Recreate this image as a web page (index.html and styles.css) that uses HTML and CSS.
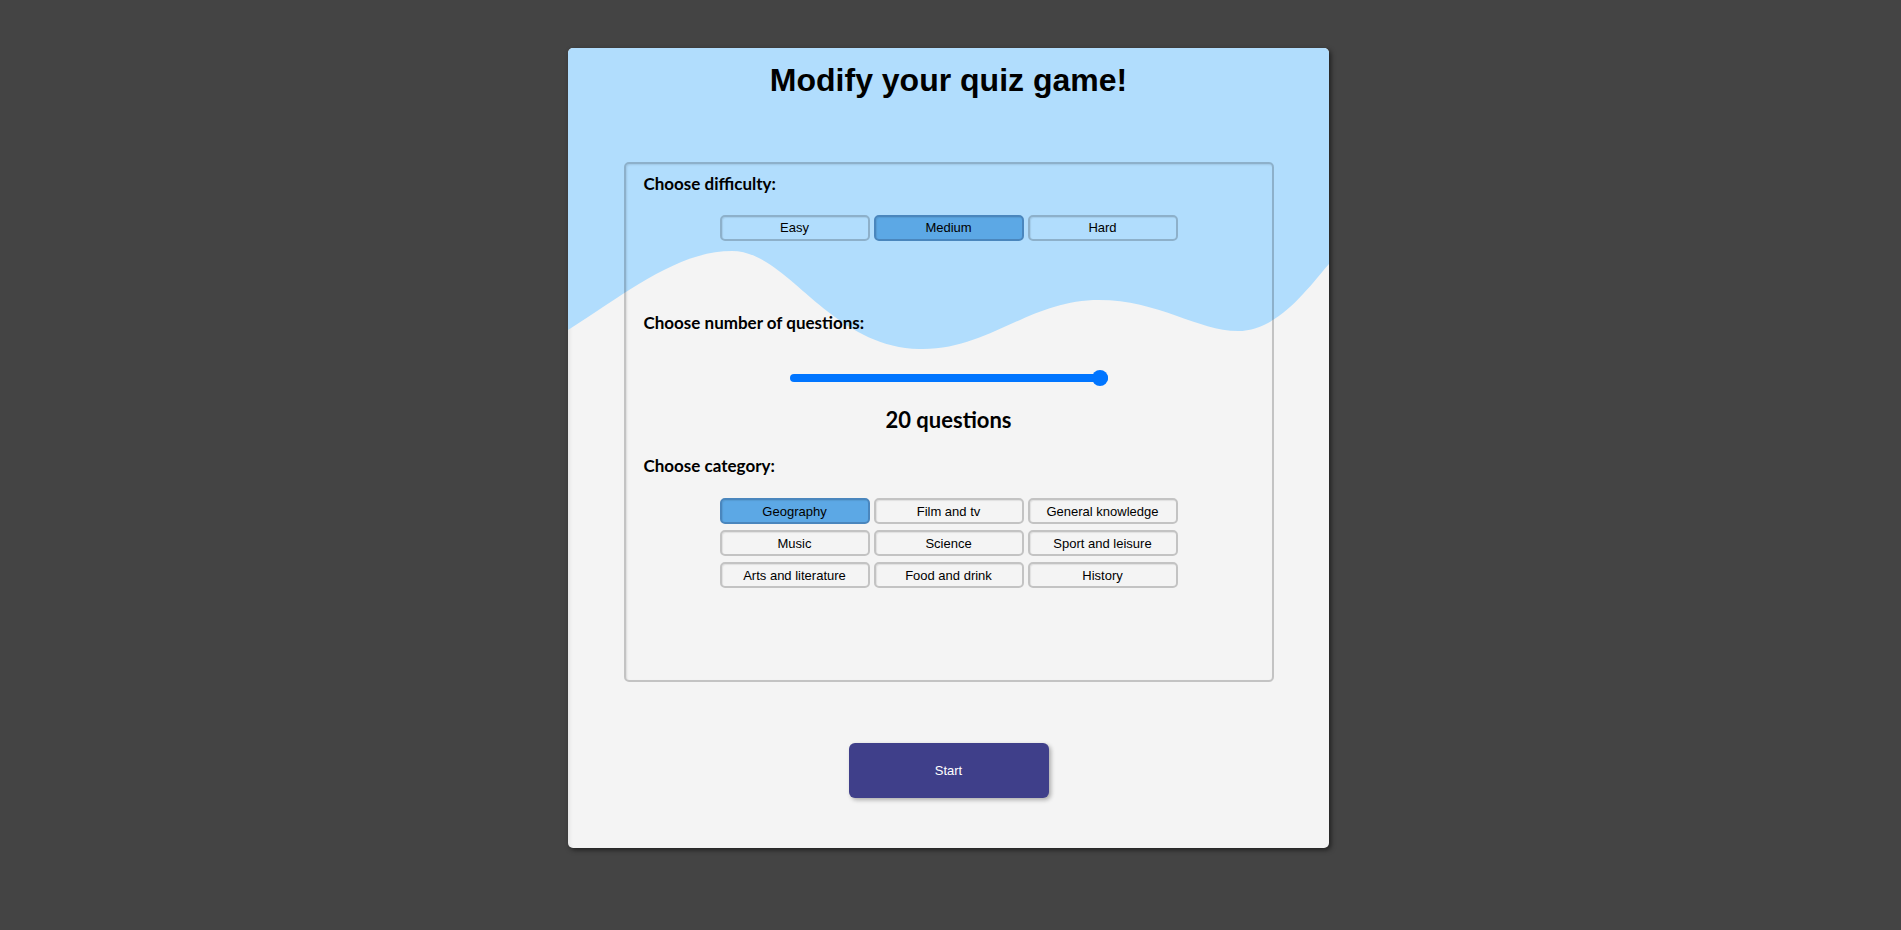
FILE: index.html
```html
<!DOCTYPE html>
<html lang="en">
<head>
<meta charset="utf-8">
<title>Modify your quiz game!</title>
<link rel="stylesheet" href="styles.css">
</head>
<body>
<main class="page">
  <section class="card">
    <svg class="wave" viewBox="0 0 761 800" preserveAspectRatio="none" aria-hidden="true">
      <path d="M0,0 H761 V216 C740,240 710,283 670,283 C630,283 590,252 531,252 C460,252 420,303 351,301 C260,298 220,203 164,203 C110,203 60,244 0,282 Z" fill="#b1ddfd"/>
    </svg>
    <h1 class="title">Modify your quiz game!</h1>
    <div class="panel">
      <h4 class="label">Choose difficulty:</h4>
      <div class="options options-diff">
        <button class="opt">Easy</button>
        <button class="opt active">Medium</button>
        <button class="opt">Hard</button>
      </div>
      <h4 class="label label-q">Choose number of questions:</h4>
      <input class="range" type="range" min="1" max="20" value="20">
      <h3 class="count">20 questions</h3>
      <h4 class="label label-cat">Choose category:</h4>
      <div class="options options-cat">
        <button class="opt active">Geography</button>
        <button class="opt">Film and tv</button>
        <button class="opt">General knowledge</button>
        <button class="opt">Music</button>
        <button class="opt">Science</button>
        <button class="opt">Sport and leisure</button>
        <button class="opt">Arts and literature</button>
        <button class="opt">Food and drink</button>
        <button class="opt">History</button>
      </div>
    </div>
    <button class="start">Start</button>
  </section>
</main>
</body>
</html>
```
FILE: styles.css
```css
html, body {
  margin: 0;
  background: #444444;
  font-family: "Liberation Sans", Arial, sans-serif;
}

.page {
  display: flex;
  justify-content: center;
  align-items: flex-start;
  padding: 48px 4px 0 0;
  min-height: 930px;
  box-sizing: border-box;
}

.card {
  position: relative;
  width: 761px;
  box-sizing: border-box;
  background: #f4f4f4;
  border-radius: 5px;
  overflow: hidden;
  padding: 14px 0 50px;
  display: flex;
  flex-direction: column;
  align-items: center;
  box-shadow: 2px 2px 5px rgba(0, 0, 0, 0.55), inset 2px 2px 4px rgba(0, 0, 0, 0.06);
}

.wave {
  position: absolute;
  left: 0;
  top: 0;
  width: 761px;
  height: 800px;
  z-index: 0;
}

.title {
  position: relative;
  z-index: 1;
  margin: 0;
  font-family: "Liberation Sans", Arial, sans-serif;
  font-weight: bold;
  font-size: 32px;
  line-height: 36.8px;
  color: #000;
}

.panel {
  position: relative;
  z-index: 1;
  margin-top: 63px;
  width: 650px;
  height: 520px;
  box-sizing: border-box;
  border: 2px solid rgba(0, 0, 0, 0.2);
  border-radius: 5px;
  padding: 8px 18px;
  display: flex;
  flex-direction: column;
  box-shadow: inset 1px 1px 2px rgba(0, 0, 0, 0.1);
}

.label {
  margin: 0;
  padding-top: 2px;
  font-family: Lato, "Open Sans", sans-serif;
  font-weight: bold;
  font-size: 17px;
  line-height: 20.4px;
  color: #000;
}

.options {
  display: grid;
  grid-template-columns: repeat(3, 150px);
  column-gap: 4px;
  row-gap: 6px;
  justify-content: center;
}

.options-diff {
  margin-top: 20.6px;
}

.options-cat {
  margin-top: 21.7px;
}

.opt {
  height: 26px;
  box-sizing: border-box;
  padding: 0;
  border: 2px solid rgba(0, 0, 0, 0.2);
  border-radius: 5px;
  background: transparent;
  font-family: "Liberation Sans", Arial, sans-serif;
  font-size: 13px;
  color: #000;
  box-shadow: inset 1px 1px 1px rgba(0, 0, 0, 0.08);
}

.opt.active {
  background: #5ca8e5;
  border-color: #4a86bd;
}

.label-q {
  margin-top: 70.2px;
}

.range {
  -webkit-appearance: none;
  appearance: none;
  display: block;
  width: 318px;
  height: 16px;
  margin: 36.4px auto 0;
  padding: 0;
  background: transparent;
}

.range::-webkit-slider-runnable-track {
  height: 8px;
  background: #0075ff;
  border-radius: 4px;
}

.range::-webkit-slider-thumb {
  -webkit-appearance: none;
  appearance: none;
  width: 16px;
  height: 16px;
  margin-top: -4px;
  border: none;
  border-radius: 50%;
  background: #0075ff;
}

.count {
  margin: 19.3px 0 0;
  padding-top: 2px;
  text-align: center;
  font-family: Lato, "Open Sans", sans-serif;
  font-weight: bold;
  font-size: 22px;
  line-height: 26.4px;
  color: #000;
}

.label-cat {
  margin-top: 20.5px;
}

.start {
  position: relative;
  z-index: 1;
  margin-top: 61px;
  width: 200px;
  height: 55px;
  border: none;
  border-radius: 6px;
  background: #3f3f8a;
  color: #fff;
  font-family: "Liberation Sans", Arial, sans-serif;
  font-size: 13px;
  box-shadow: 2px 2px 4px rgba(0, 0, 0, 0.3);
}
```
